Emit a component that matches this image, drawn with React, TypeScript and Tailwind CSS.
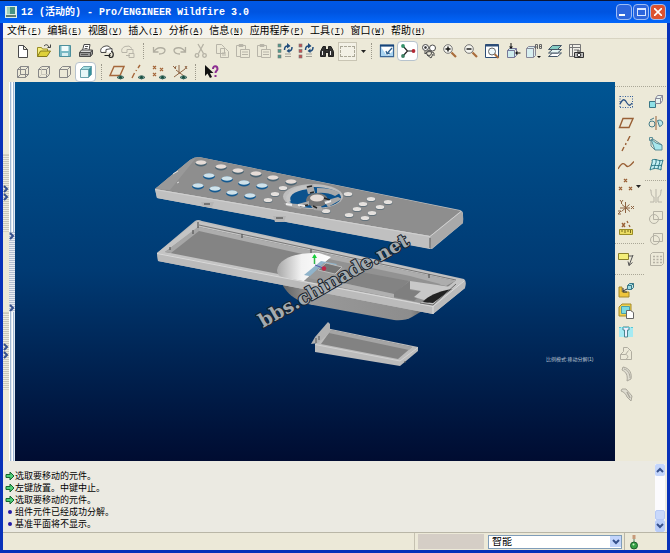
import React from "react";

type Kids = { children?: React.ReactNode };

const Glyph = ({ children }: Kids) => (
  <svg viewBox="0 0 16 16" className="size-4 shrink-0" fill="none" stroke="#4a4a4a" strokeWidth="1" aria-hidden="true">
    {children}
  </svg>
);

const eye = (
  <g>
    <path d="M8 13.500q3.500-3.500 7 0q-3.500 3-7 0z" fill="#8fb8ac" stroke="#35605a" />
    <circle cx="11.500" cy="13.300" r="1.400" fill="#134b3c" stroke="none" />
  </g>
);
const cube = (
  <path d="M2.500 5.500h8v8h-8zM5.500 2.500h8v8M2.500 5.500l3-3M10.500 5.500l3-3M10.500 13.500l3-3" />
);
const tree = (color: string) => (
  <g>
    <g fill={color} stroke="#777" strokeWidth=".6">
      <rect x="1" y="1" width="3" height="3" />
      <rect x="1" y="6.500" width="3" height="3" />
      <rect x="1" y="12" width="3" height="3" />
    </g>
    <path d="M8 11h6M8 13.500h6" stroke="#a5a39a" />
    <path d="M7.500 7q0-4 3-4M15 4q0 4-3 4" stroke="#1e4b7c" strokeWidth="1.500" />
    <path d="M10 0l3.500 3L10 5.500zM12.500 5.500l-3 2.500 3 2z" fill="#1e4b7c" stroke="none" />
  </g>
);
const clipboard = (
  <g stroke="#b8b5a9">
    <path d="M1.500 2.500h9v11h-9zM4 1.500h4v2H4z" />
    <path d="M5.500 6.500h9v8h-9zM7 9h6M7 11.500h6" fill="#ece9d8" />
  </g>
);
const lens = (
  <g>
    <path d="M9.500 9.500l4.500 4.500" stroke="#a96d3c" strokeWidth="2.200" />
    <circle cx="6" cy="6" r="4.300" fill="#f4f4ee" stroke="#777" />
  </g>
);

const art: Record<string, React.ReactNode> = {
  新建: <path d="M3.500 2.500h5l4 4v8h-9zM8.500 2.500v4h4" fill="#fff" />,
  打开: (
    <g>
      <path d="M1.500 13.500v-9h4l1 1.500h5v2.500" fill="#f6ef7a" stroke="#9a8d24" />
      <path d="M1.500 13.500l3-5.500h10l-3.500 5.500z" fill="#ded13a" stroke="#83781c" />
      <path d="M8 3q3-3 5 1M14.500 1.500v3h-3" stroke="#444" />
    </g>
  ),
  保存: (
    <g>
      <path d="M2.500 2.500h11v11h-11z" fill="#79b9c4" stroke="#4d8f9c" />
      <path d="M4.500 3h7v5h-7z" fill="#f2fbfb" stroke="none" />
      <path d="M5 10h6v3H5z" fill="#d9eef0" stroke="none" />
    </g>
  ),
  打印: (
    <g>
      <path d="M4.500 7.500l1.500-6h6l-1 6" fill="#fff" />
      <path d="M1.500 9.500l2-2.500h11l-2 2.500z" fill="#d8d8d8" />
      <path d="M1.500 9.500h11v4h-11zM12.500 9.500l2-2.500v4l-2 2.500" fill="#999" />
      <path d="M7 3.500h3M6.500 5.500h3M3 11.500h7" stroke="#555" />
    </g>
  ),
  发送: (
    <g>
      <path d="M2 9.500a5.500 5 0 0 1 10-4M2 9.500h5v-3l6-1v4" fill="#fff" />
      <path d="M5.500 12.500h6M12 8.500c3 0 3 6 0 6s-2-4 0-4" stroke="#222" strokeWidth="1.200" />
    </g>
  ),
  链接: (
    <g stroke="#b8b5a9">
      <path d="M2 9.500a5.500 5 0 0 1 10-4M2 9.500h5v-3h6v4" />
      <path d="M6 12.500h4M9 10.500h5v4H9z" />
    </g>
  ),
  撤消: <path d="M2.500 4v5h5M3 8.500c3-5 10-4.500 11-1.500 0 3-2.500 4-6 4" stroke="#b0ada0" strokeWidth="1.300" />,
  重做: <path d="M13.500 4v5h-5M13 8.500c-3-5-10-4.500-11-1.500 0 3 2.500 4 6 4" stroke="#b0ada0" strokeWidth="1.300" />,
  剪切: (
    <g stroke="#b5b2a5" strokeWidth="1.300">
      <path d="M5 1l5.500 9.500M10.500 1L5.500 10.500" />
      <circle cx="4" cy="12.500" r="1.800" />
      <circle cx="11.500" cy="12.500" r="1.800" />
    </g>
  ),
  复制: <path d="M2.500 1.500h5l3 3v6h-8zM6.500 5.500h5l3 3v6h-8zM8 10h4M8 12h4" stroke="#b8b5a9" fill="#ece9d8" />,
  粘贴: clipboard,
  选择性粘贴: clipboard,
  再生: tree("#4d9b8b"),
  再生管理器: tree("#c45252"),
  查找: (
    <g fill="#333" stroke="#222">
      <path d="M1.500 13.500v-5l2.500-5h2.500v10zM14.500 13.500v-5L12 3.500H9.500v10z" />
      <path d="M6 6.500h4v3H6z" />
      <path d="M3.500 8v4M11.500 8v4" stroke="#eee" />
    </g>
  ),
  重画: (
    <g>
      <path d="M1.500 2.500h13v11h-13z" fill="#fff" stroke="#3a6797" strokeWidth="1.300" />
      <path d="M1 2.500h14" stroke="#16457b" strokeWidth="2" />
      <path d="M2 4l6 9 6-5v5H2z" fill="#a9d4f0" stroke="none" />
      <path d="M13 5L8.500 10M7 8l1 3 3-1" stroke="#2b5f8e" strokeWidth="1.200" />
    </g>
  ),
  旋转中心: (
    <g>
      <path d="M3 3l4.500 5L3 13M7.500 8H13" stroke="#222" strokeWidth="1.200" />
      <circle cx="3" cy="3" r="1.900" fill="#35936b" stroke="none" />
      <circle cx="3" cy="13" r="1.900" fill="#3d8064" stroke="none" />
      <circle cx="13.500" cy="8" r="1.900" fill="#b32935" stroke="none" />
    </g>
  ),
  定向模式: (
    <g>
      <circle cx="4.500" cy="4.500" r="3" fill="#fff" />
      <circle cx="11.500" cy="5" r="3" fill="#fff" />
      <path d="M4 11c2-3 6-3 9-1M4 11v-3M13 10v3M6 12l4 3 2-4" />
      <circle cx="4.500" cy="4.500" r="1" fill="#333" />
      <circle cx="8" cy="10" r="2.500" />
    </g>
  ),
  放大: (
    <g>
      {lens}
      <path d="M3.500 6h5M6 3.500v5" stroke="#111" strokeWidth="1.400" />
    </g>
  ),
  缩小: (
    <g>
      {lens}
      <path d="M3.500 6h5" stroke="#111" strokeWidth="1.400" />
    </g>
  ),
  重新调整: (
    <g>
      <path d="M1.500 1.500h13v13h-13z" fill="#fff" stroke="#2c4d77" />
      <path d="M1.500 2.500h13" stroke="#2c4d77" strokeWidth="2" />
      <path d="M10.500 11l4 4" stroke="#a96d3c" strokeWidth="2" />
      <circle cx="8" cy="8.500" r="3.500" fill="#eef8fb" stroke="#666" />
    </g>
  ),
  重定向: (
    <g>
      <path d="M2.500 7.500h7v7h-7zM2.500 7.500l2-2h7l-2 2M9.500 14.500l2-2v-7" fill="#cdebed" stroke="#779" />
      <path d="M6 0v5M15.500 10H11" stroke="#111" />
      <path d="M4 3.500h4L6 6zM12.500 8v4L10 10z" fill="#111" stroke="none" />
    </g>
  ),
  视图列表: (
    <g>
      <path d="M.500 5.500h7v9h-7zM.500 5.500l2-2h7l-2 2M7.500 14.500l2-2v-9" fill="#d8eff0" stroke="#889" />
      <path d="M9.500 6V1.500h2V6M9.500 4h2M13.500 1.500h2v4h-2zM13.500 3.500h2" stroke="#666" />
      <path d="M11 13h4l-2 2z" fill="#111" stroke="none" />
    </g>
  ),
  图层: (
    <g stroke="#456">
      <path d="M1.500 13.500l4-3.500h9l-4 3.500z" fill="#fff" />
      <path d="M1.500 10l4-3.500h9l-4 3.500z" fill="#e7f5f3" />
      <path d="M1.500 6.500l4-4h9l-4 4z" fill="#86cdc4" />
    </g>
  ),
  视图管理器: (
    <g stroke="#777">
      <path d="M1.500 1.500h11v12h-11zM4.500 1.500v12M1.500 4.500h11M6 7h5" fill="#f1f0e8" />
      <path d="M6.500 9.500h9v5h-9zM9 8h3" fill="#bbb" stroke="#333" />
      <circle cx="11" cy="12" r="1.800" fill="#fff" stroke="#222" />
    </g>
  ),
  线框: <g stroke="#888">{cube}<path d="M5.500 2.500v8h8M5.500 10.500l-3 3" /></g>,
  隐藏线: <g stroke="#888">{cube}<path d="M5.500 2.500v8h8M5.500 10.500l-3 3" stroke="#c9c6ba" /></g>,
  无隐藏线: <g stroke="#888">{cube}</g>,
  着色: (
    <g stroke="#6aa3ad">
      <path d="M2.500 5.500h8v8h-8z" fill="#e6f7f8" />
      <path d="M2.500 5.500l3-3h8l-3 3z" fill="#a6dee1" />
      <path d="M10.500 5.500l3-3v8l-3 3z" fill="#34919d" />
    </g>
  ),
  平面显示: <g><path d="M1 11.500L5 2.500h10l-4 9z" stroke="#a5673b" strokeWidth="1.400" />{eye}</g>,
  轴显示: <g><path d="M2 14L4.500 9M6 7l.5-1M8 4l2-3" stroke="#a5673b" strokeWidth="1.400" />{eye}</g>,
  点显示: <g><path d="M2 2l3 3M5 2L2 5M9 4l3 3M12 4L9 7M2 9l3 3M5 9l-3 3" stroke="#a5673b" strokeWidth="1.200" />{eye}</g>,
  坐标系显示: <g><path d="M1 2l3 3M4 2L3 5M7 1v9M2 13L13 5M4 6l8 6M13 2l2 3M15 2l-2 3" stroke="#8f6545" />{eye}</g>,
  帮助: (
    <g>
      <path d="M2 1v11l2.500-2.500L7 14l2-1-2-4h3.500z" fill="#111" stroke="none" />
      <path d="M10 5c0-4 4.500-3.500 4.500 0 0 2-2 1.500-2 4M12.500 11v2" stroke="#8d2e92" strokeWidth="2" />
    </g>
  ),
  草绘: (
    <g>
      <path d="M2 2.500h13M2 13.500h13M2 2v12M14.500 2v12" stroke="#345f9a" strokeDasharray="1 1.500" />
      <path d="M2 10c3-6 5-5 7-1 2 3 3 3 5 0" stroke="#2b5184" strokeWidth="1.300" />
    </g>
  ),
  基准平面: <path d="M1.500 12.500L5 3.500h10l-4 9z" stroke="#996036" strokeWidth="1.400" />,
  基准轴: <path d="M4 15l2-4M7.500 9l.5-2M9.500 5L12 0" stroke="#996036" strokeWidth="1.400" />,
  基准曲线: <path d="M0 12c4-7 6-6 8-3.500s5-.5 8-4" stroke="#996036" strokeWidth="1.400" />,
  基准点: <path d="M6 1l3 3M9 1L6 4M1 9l3 3M4 9l-3 3M11 9l3 3M14 9l-3 3" stroke="#996036" strokeWidth="1.300" />,
  坐标系: <path d="M2 1l1.500 2L5 1M3.500 3v2M7.500 3v11M2 9h10M3.500 12.500l8-7M4 5.500l8 7M13 7l3 3M16 7l-3 3M0 12h3l-3 3h3" stroke="#8d6342" />,
  分析特征: (
    <g>
      <path d="M1.500 9.500h13v5h-13z" fill="#eadb61" stroke="#9a8d24" />
      <path d="M4 10v2M7 10v3M10 10v2M12.500 10v3" stroke="#776b17" />
      <path d="M4 3l3 4M7 3L4 7M9 1l1 2M11 5l1 2" stroke="#996036" strokeWidth="1.300" />
    </g>
  ),
  注释: (
    <g>
      <path d="M.500 2.500h10v6H.500z" fill="#f3ee79" stroke="#8a812b" />
      <path d="M15 4l-4 10.500M11 14.500l3.500-3M11 14.500l-1-4M10.500 5H15" stroke="#555" />
    </g>
  ),
  装配: (
    <g>
      <path d="M1 5h3v5h7v5H1z" fill="#efc53c" stroke="#a58a2a" />
      <path d="M9.500 3.500h4v4h-4zM9.500 3.500l2-2h4l-2 2M13.500 7.500l2-2v-4" fill="#9edce5" stroke="#397786" />
      <path d="M5 9l4-2M5 6v4h4" stroke="#333" />
    </g>
  ),
  创建: (
    <g>
      <path d="M1 4l3-3h9v8l-3 4H1z" fill="#efd24f" stroke="#a58a2a" />
      <path d="M3.500 3.500h8v7h-8z" fill="#7ddbe0" stroke="#4ba0aa" />
      <path d="M8.500 7.500h4l3 2v6h-7z" fill="#fff" stroke="#666" />
    </g>
  ),
  孔: (
    <g>
      <path d="M1 3h14v10H1z" fill="#a5eaf2" stroke="none" />
      <path d="M5 3h6v3H9.500v7h-3V6H5z" fill="#eef" stroke="#4b8790" />
      <path d="M1 3.500h14" stroke="#5cc7d4" strokeDasharray="2 1" />
    </g>
  ),
  壳: <path d="M2.500 14.500v-5l3-3v-4h4l4 4v8zM2.500 9.500h5l3-4M7.500 14.500c4-2 2-5 0-5" stroke="#b0ada0" />,
  倒圆角: (
    <g stroke="#aaa79b">
      <path d="M5 1c7 1 9 7 8 12l-4 2c1-6-1-9-5-11z" fill="#dedcd0" />
      <path d="M6 3c4 1 6 5 6 9" />
    </g>
  ),
  倒角: (
    <g stroke="#aaa79b">
      <path d="M4 2h4l6 7-1 5-4-4C8 7 6 5 3 4z" fill="#dedcd0" />
      <path d="M9 5l3 6" strokeWidth="1.500" />
    </g>
  ),
  元件操作: (
    <g stroke="#397786">
      <path d="M1.500 7.500h6v6h-6z" fill="#8fe0e6" />
      <path d="M7.500 4.500h5v5h-5zM7.500 4.500l2-3h5l-2 3M12.500 9.500l2-3v-5" fill="#e8f3ef" stroke="#889" />
    </g>
  ),
  镜像工具: (
    <g stroke="#477d89">
      <path d="M8 1v14" stroke="#996036" />
      <circle cx="4" cy="9" r="3" />
      <path d="M9.500 5.500c6-2 7 5 2 6z" fill="#b8e6eb" />
      <path d="M2 5l4-2" />
    </g>
  ),
  拉伸: (
    <g stroke="#5c8f98">
      <path d="M3 3l5 4 6 2v5H7z" fill="#a7e8ee" />
      <path d="M1.500 1.500h3v3h-3zM3 5v5l4 4M5 3l9 6" />
    </g>
  ),
  曲面: (
    <g stroke="#2b7886">
      <path d="M2 13C3 8 5 5 4 3c4-2 7 2 11 0-1 4-2 6-2 10-4-2-7-2-11 0z" fill="#c5f0f4" />
      <path d="M3 9c4-2 7 1 11-1M8 2c1 5-2 6-2 10M12 3c0 4-2 6-2 9" />
    </g>
  ),
  镜像: <path d="M8 1v14M2 2h1c0 6 2 7 3 7v5H2M14 2h-1c0 6-2 7-3 7v5h4" stroke="#b8b5a9" />,
  合并: <g stroke="#b5b2a5"><path d="M5.500 2.500h9v8h-9z" /><circle cx="6" cy="10" r="4.500" /></g>,
  修剪: <g stroke="#b5b2a5"><path d="M5.500 3.500h9v8h-9z" /><circle cx="7" cy="10" r="4.500" /></g>,
  阵列: (
    <g stroke="#b5b2a5">
      <path d="M2.500 3.500l2-2h11v11l-2 2h-11z" />
      <path d="M5 5.500h9M5 8.500h9M5 11.500h9" strokeWidth="1.500" strokeDasharray="2 1.500" />
    </g>
  ),
};

const Tool = ({ name, pressed }: { name: string; pressed?: boolean }) => (
  <button
    type="button"
    aria-label={name}
    className={
      pressed
        ? "flex h-5 w-[21px] shrink-0 items-center justify-center rounded-sm border border-[#b7c3cd] bg-white"
        : "flex h-5 w-[21px] shrink-0 items-center justify-center"
    }
  >
    <Glyph>{art[name]}</Glyph>
  </button>
);

const VBar = () => (
  <span className="flex w-[10px] shrink-0 justify-center">
    <span className="h-4 border-l border-dotted border-[#9c998b]" />
  </span>
);

const Drop = () => (
  <svg viewBox="0 0 5 3" className="h-[3px] w-[5px]" aria-hidden="true">
    <path d="M0 0h5L2.500 3z" fill="#222" />
  </svg>
);

const Chevron = ({ down, up }: { down?: boolean; up?: boolean }) => (
  <svg viewBox="0 0 8 8" className="size-2 shrink-0" fill="none" stroke="#35508c" strokeWidth="2" aria-hidden="true">
    <path d={up ? "M1 6l3-3 3 3" : down ? "M1 2l3 3 3-3" : "M2 1l3 3-3 3"} />
  </svg>
);

const menus = [
  ["文件", "F"], ["编辑", "E"], ["视图", "V"], ["插入", "I"], ["分析", "A"],
  ["信息", "N"], ["应用程序", "P"], ["工具", "T"], ["窗口", "W"], ["帮助", "H"],
];

const messages = [
  { prompt: true, text: "选取要移动的元件。" },
  { prompt: true, text: "左键放置。中键中止。" },
  { prompt: true, text: "选取要移动的元件。" },
  { prompt: false, text: "组件元件已经成功分解。" },
  { prompt: false, text: "基准平面将不显示。" },
];

const keyHoles = [
  [201, 163], [221, 167], [238, 171], [256, 174], [273, 178], [291, 182],
  [209, 176], [227, 179], [244, 183], [262, 186],
  [198, 186], [215, 189], [232, 193], [250, 196],
];
const smallHoles = [
  [283, 188], [275, 194], [268, 200], [348, 194], [371, 199], [388, 202], [363, 204],
  [380, 207], [357, 209], [372, 213], [349, 215], [365, 218], [326, 211],
];

const Model = () => (
  <svg viewBox="15 82 600 379" className="block h-full w-full" role="img" aria-label="遥控器分解视图">
    <defs>
      <linearGradient id="dome" x1="0" x2="1">
        <stop offset="0" stopColor="#a8a8a8" />
        <stop offset=".45" stopColor="#f2f2f2" />
        <stop offset="1" stopColor="#fff" />
      </linearGradient>
      <linearGradient id="belly" x1="0" x2="1">
        <stop offset="0" stopColor="#5c5c5c" />
        <stop offset=".2" stopColor="#999" />
        <stop offset=".85" stopColor="#8d8d8d" />
        <stop offset="1" stopColor="#4b4b4b" />
      </linearGradient>
    </defs>

    {/* upper cover */}
    <path d="M155 189L190 160Q194 157 199 157L460 210Q463 211 463 214V223L432 249L157 198z" fill="#c2c2c2" />
    <path d="M155 189L190 160Q194 157 199 157L461 211L430 236z" fill="#8e8e8e" />
    <path d="M155 189L190 160L196 158L170 190z" fill="#999" />
    <path d="M155 189L430 236V249L157 198z" fill="#c0c0c0" />
    <path d="M430 236L461 211Q464 213 463 223L431 249z" fill="#a9a9a9" />
    <path d="M155 189.500L430 236.500L461 211.500" fill="none" stroke="#d0d0d0" />
    <path d="M430 238v10" stroke="#555" />
    <path d="M201 202h13l-2 5h-9zM273 216h13l-2 6h-9z" fill="#b5b5b5" />
    <path d="M204 204h6M276 218h7" stroke="#333" />
    <path d="M173 174l5-3M177 183l2-1" stroke="#ddd" />
    {keyHoles.map(([x, y], i) => (
      <g key={i}>
        <ellipse cx={x} cy={y + 0.5} rx="5.800" ry="3" fill={i < 6 ? "#4c6472" : "#155a91"} />
        <ellipse cx={x} cy={y - 0.5} rx="5.500" ry="2.200" fill={i < 6 ? "#e6ddd8" : "#cfe2ea"} />
      </g>
    ))}
    {smallHoles.map(([x, y], i) => (
      <g key={i}>
        <ellipse cx={x} cy={y + 0.5} rx="4.600" ry="2.600" fill="#63727b" />
        <ellipse cx={x} cy={y} rx="4.300" ry="2.100" fill="#e5e1de" />
      </g>
    ))}
    <ellipse cx="313" cy="196.500" rx="30" ry="12.500" fill="#bdbdbd" />
    <ellipse cx="314" cy="197.500" rx="27" ry="10.500" fill="#0b528d" />
    <path d="M289 202C285 193 298 187 312 187" fill="none" stroke="#c4c4c4" strokeWidth="4" />
    <path d="M317 188q16 0 23 5l-5 3q-8-4-18-3z" fill="#aaa" />
    <ellipse cx="317" cy="200" rx="11" ry="7" fill="#767676" />
    <ellipse cx="317" cy="198" rx="7" ry="3.500" fill="#e5dcd7" />
    <path d="M306 186l7-2 2 9-7 1zM284 203l14 1 11-3v4l-9 4-13-3zM324 201l14-4 4 2-14 8zM311 206h10l2 5-9-1z" fill="#a9a9a9" />
    <path d="M307 187l5-1M310 193l4-1M313 206l4 2M300 206l8-1M324 198l6 2" stroke="#252525" strokeWidth="1.500" />
    <path d="M286 204l6 1M298 205l7 1M325 203l6-2" stroke="#eee" strokeWidth="2" />

    {/* lower housing */}
    <path d="M279 273C281 289 292 301 313 305L394 320Q405 321 412 317L434 304z" fill="url(#belly)" />
    <path d="M157 253L195 221Q198 219 202 221L464 279Q467 281 465 288L433 314L158 261z" fill="#bdbdbd" />
    <path d="M157 253L197 221.500L464 280L433 306z" fill="#c4c4c4" />
    <path d="M165 252L199 227L455 281L428 303z" fill="#848484" />
    <path d="M199 227L455 281L446 286L199 231z" fill="#adadad" />
    <path d="M199 225L456 280" stroke="#777" />
    <path d="M165 252L199 226V231L171 253z" fill="#a6a6a6" />
    <path d="M193 230v4M198 222v6M242 234v4M311 249v4M429 274v4M170 247v3" stroke="#444" />
    <path d="M277 270C279 258 297 252 319 253L331 257L304 281C289 280 277 279 277 270z" fill="url(#dome)" />
    <path d="M304 281L329 259L410 276L440 284L420 303z" fill="#929292" />
    <path d="M304 275L321 261L337 264L324 279z" fill="#90b4cb" />
    <path d="M308 278L324 263L345 268L331 283z" fill="#9a9a9a" />
    <path d="M326 263L342 267L335 274L318 270z" fill="#777" stroke="#bbb" />
    <path d="M345 269L409 281L394 294L334 281z" fill="#838383" />
    <path d="M334 281L394 294V298L334 286z" fill="#b0b0b0" />
    <path d="M394 293L410 281V290L423 292L414 301L394 297z" fill="#7f7f7f" />
    <path d="M410 281L451 287L424 300L414 297L421 291L410 289z" fill="#c8c8c8" />
    <path d="M423 302Q430 293 452 289L433 303z" fill="#222" />
    <path d="M157 253L433 306L465 280V288L433 314L158 261z" fill="#bbb" />
    <path d="M157 253.500L433 306.500L464 281" fill="none" stroke="#d9d9d9" />
    <path d="M420 303L433 305L456 284" fill="none" stroke="#686868" />
    <path d="M433 306v8" stroke="#ddd" />
    <path d="M314.500 264v-9" stroke="#32b54a" strokeWidth="1.500" />
    <path d="M312 258l2.500-4 2.500 4z" fill="#18cf3b" />
    <path d="M315 265l8 3" stroke="#55a" />
    <circle cx="324" cy="268.500" r="2.200" fill="#c32747" />

    {/* battery door */}
    <path d="M315 344L326 328L418 347V351L400 366L315 352z" fill="#bcbcbc" />
    <path d="M321 344L331 330L412 347L398 359z" fill="#828282" />
    <path d="M331 330L412 347L409 350L329 333z" fill="#a5a5a5" />
    <path d="M315 344.500L400 361L418 347.500" fill="none" stroke="#d2d2d2" />
    <path d="M315 337L328 322L330 324V332L318 343L311 344z" fill="#b2b2b2" />
    <path d="M316 338v5M319 336v4M405 361v2" stroke="#555" />

    <text
      transform="translate(263 328) rotate(-29.500)"
      className="fill-[#a3abb0] stroke-[#1a222b] font-['DejaVu_Serif',serif] text-[19px] font-bold"
      strokeWidth="2"
      strokeLinejoin="round"
      paintOrder="stroke"
    >
      bbs.chinade.net
    </text>
    <text x="546" y="361" className="fill-[#b8c2ce] font-['Liberation_Sans','Noto_Sans_CJK_SC',sans-serif] text-[5px]">
      比例模式:移动分解(1)
    </text>
  </svg>
);

const Grip = () => (
  <button
    type="button"
    aria-label="展开面板"
    className="flex h-[78px] w-full flex-col items-center justify-center border-y border-[#d6d2c2] bg-[repeating-linear-gradient(#c9c6ba_0_1px,#eeecdf_1px_2px)]"
  >
    <Chevron />
    <Chevron />
  </button>
);

const SideRule = () => <div className="my-1 h-px w-full border-t border-dotted border-[#aaa797]" />;

const windowButton = "flex size-4 items-center justify-center rounded-sm border border-[#9dbcf5]";

export default function App() {
  return (
    <div className="flex h-screen min-h-[420px] w-full flex-col border-t border-[#0a1536] bg-[#0831b9] font-['Liberation_Sans','Noto_Sans_CJK_SC',sans-serif] text-black">
      <header className="flex h-[22px] shrink-0 items-center justify-between bg-linear-to-b from-[#0058e6] via-[#0054e0] to-[#0366fb] pr-1 pl-[5px]">
        <div className="flex items-center gap-1 text-white">
          <svg viewBox="0 0 12 12" className="size-3" aria-hidden="true">
            <path d="M0 0h12v12H0z" fill="#dceee3" />
            <path d="M2 1h8v7H2z" fill="#459386" />
            <path d="M2 1h3v7H2z" fill="#9fd0bd" />
            <path d="M1 9h10v2H1z" fill="#5e7d72" />
          </svg>
          <h1 className="font-['Liberation_Mono','Noto_Sans_CJK_SC',monospace] text-[10px] font-bold whitespace-pre">
            12 (活动的) - Pro/ENGINEER Wildfire 3.0
          </h1>
        </div>
        <div className="flex gap-px">
          <button type="button" aria-label="最小化" className={windowButton + " bg-[#2e66dc]"}>
            <span className="mt-1.5 mr-1 h-0.5 w-1.5 bg-white" />
          </button>
          <button type="button" aria-label="最大化" className={windowButton + " bg-[#2e66dc]"}>
            <span className="h-2 w-[9px] border border-t-2 border-[#dbe8ff]" />
          </button>
          <button type="button" aria-label="关闭" className={windowButton + " bg-[#dd5230]"}>
            <svg viewBox="0 0 8 8" className="size-2" stroke="#fff" strokeWidth="1.600" aria-hidden="true">
              <path d="M0 0l8 8M8 0L0 8" />
            </svg>
          </button>
        </div>
      </header>

      <div className="mx-[3px] mb-[3px] flex min-h-0 flex-1 flex-col bg-[#ece9d8]">
        <nav className="flex h-4 shrink-0 items-center border-b border-[#d8d4c2] bg-linear-to-r from-[#f7f6f1] to-[#efecdf] pl-1 text-[10px] leading-none">
          {menus.map(([label, key]) => (
            <button key={key} type="button" className="mr-[6px] flex shrink-0 items-center whitespace-nowrap">
              {label}
              <span className="font-['Liberation_Mono',monospace] text-[8px]">
                (<u>{key}</u>)
              </span>
            </button>
          ))}
        </nav>

        <div className="flex h-[43px] shrink-0 flex-col gap-px pt-[2px] pl-[9px]">
          <div className="flex h-5 items-center">
            {["新建", "打开", "保存", "打印", "发送", "链接"].map((n) => <Tool key={n} name={n} />)}
            <VBar />
            {["撤消", "重做", "剪切", "复制", "粘贴", "选择性粘贴", "再生", "再生管理器", "查找"].map((n) => (
              <Tool key={n} name={n} />
            ))}
            <button type="button" aria-label="选取" className="flex h-5 shrink-0 items-center gap-1 pl-px">
              <span className="flex size-[19px] items-center justify-center border border-[#c9c5b4] bg-[#f3f1e6]">
                <span className="h-[11px] w-[15px] border border-dashed border-[#aaa797]" />
              </span>
              <Drop />
            </button>
            <VBar />
            <Tool name="重画" />
            <Tool name="旋转中心" pressed />
            {["定向模式", "放大", "缩小", "重新调整", "重定向", "视图列表", "图层", "视图管理器"].map((n) => (
              <Tool key={n} name={n} />
            ))}
          </div>
          <div className="flex h-5 items-center">
            {["线框", "隐藏线", "无隐藏线"].map((n) => <Tool key={n} name={n} />)}
            <Tool name="着色" pressed />
            <VBar />
            {["平面显示", "轴显示", "点显示", "坐标系显示"].map((n) => <Tool key={n} name={n} />)}
            <VBar />
            <Tool name="帮助" />
          </div>
        </div>

        <div className="flex min-h-0 flex-1">
          <div className="flex w-[6px] shrink-0 flex-col justify-center gap-20 bg-[#ece9d8]">
            <Grip />
            <Grip />
          </div>
          <div className="flex w-[6px] shrink-0 flex-col items-center bg-[repeating-linear-gradient(90deg,#fff_0_1px,#9fb7d2_1px_2px,#dfe9f2_2px_3px)]">
            <div className="flex-1" />
            <button
              type="button"
              aria-label="切换浏览器"
              className="flex h-20 w-full flex-col items-center justify-between bg-[repeating-linear-gradient(#b3bed0_0_1px,#e9edf2_1px_2px)]"
            >
              <Chevron />
              <Chevron />
            </button>
            <div className="flex-1" />
          </div>
          <main className="min-w-0 flex-1 bg-linear-to-b from-[#005593] via-[#003a73] to-[#000c31]">
            <Model />
          </main>
          <aside className="flex w-[52px] shrink-0 justify-between pr-px">
            <div className="flex w-[29px] flex-col items-start gap-px">
              <SideRule />
              {["草绘", "基准平面", "基准轴", "基准曲线"].map((n) => <Tool key={n} name={n} />)}
              <div className="flex items-center">
                <Tool name="基准点" />
                <Drop />
              </div>
              <Tool name="坐标系" />
              <Tool name="分析特征" />
              <SideRule />
              <Tool name="注释" />
              <SideRule />
              {["装配", "创建", "孔", "壳", "倒圆角", "倒角"].map((n) => <Tool key={n} name={n} />)}
            </div>
            <div className="flex w-[21px] flex-col items-start gap-px">
              <SideRule />
              {["元件操作", "镜像工具", "拉伸", "曲面"].map((n) => <Tool key={n} name={n} />)}
              <SideRule />
              {["镜像", "合并", "修剪", "阵列"].map((n) => <Tool key={n} name={n} />)}
            </div>
          </aside>
        </div>

        <section className="flex h-[71px] shrink-0 bg-[#ebeae2] pt-[3px]">
          <ul className="flex-1 pt-[6px] pl-[2px] text-[9px] leading-3">
            {messages.map((m, i) => (
              <li key={i} className="flex items-center">
                <span className="flex w-[10px] items-center justify-center">
                  {m.prompt ? (
                    <svg viewBox="0 0 10 10" className="size-[10px]" aria-hidden="true">
                      <path d="M1 3.500h4V1l4 4-4 4V6.500H1z" fill="#4fce78" stroke="#14652e" />
                    </svg>
                  ) : (
                    <span className="size-1 rounded-full bg-[#2319a5]" />
                  )}
                </span>
                {m.text}
              </li>
            ))}
          </ul>
          <div className="mr-[2px] flex w-[10px] flex-col bg-[#fbfbfe]">
            <button type="button" aria-label="向上滚动" className="flex h-3 items-center justify-center rounded-xs bg-[#c3d5fc]">
              <Chevron up />
            </button>
            <div className="flex-1" />
            <div className="h-[10px] rounded-xs border border-[#b5c9f5] bg-[#c8d8fb]" />
            <button type="button" aria-label="向下滚动" className="flex h-3 items-center justify-center rounded-xs bg-[#b9cdf9]">
              <Chevron down />
            </button>
          </div>
        </section>

        <footer className="flex h-[18px] shrink-0 items-stretch justify-end border-t border-[#b9b6a7]">
          <div className="w-[70px] border-l border-[#c5c1b0] py-px pl-[3px]">
            <div className="h-full bg-[#d5cec6]" />
          </div>
          <div className="relative my-0.5 ml-1 w-[134px]">
            <select
              aria-label="选择过滤器"
              defaultValue="智能"
              className="block h-[14px] w-full appearance-none border border-[#7f9db9] bg-white pl-[3px] text-[10px] leading-none"
            >
              <option>智能</option>
            </select>
            <span className="pointer-events-none absolute inset-y-px right-px flex w-[11px] items-center justify-center bg-[#c3d5fc]">
              <Chevron down />
            </span>
          </div>
          <div className="ml-[2px] flex w-[43px] items-center border-l border-[#b9b6a7] pl-1">
            <svg viewBox="0 0 10 16" className="h-4 w-[10px]" aria-hidden="true">
              <path d="M3.500 1h3v4h-3z" fill="#c79a7a" />
              <path d="M4 5h2v4H4z" fill="#9db8a0" />
              <circle cx="5" cy="11.500" r="3.500" fill="#35a043" stroke="#1a5c29" />
              <circle cx="4.500" cy="10.500" r="1" fill="#cff0cb" />
            </svg>
          </div>
        </footer>
      </div>
    </div>
  );
}
